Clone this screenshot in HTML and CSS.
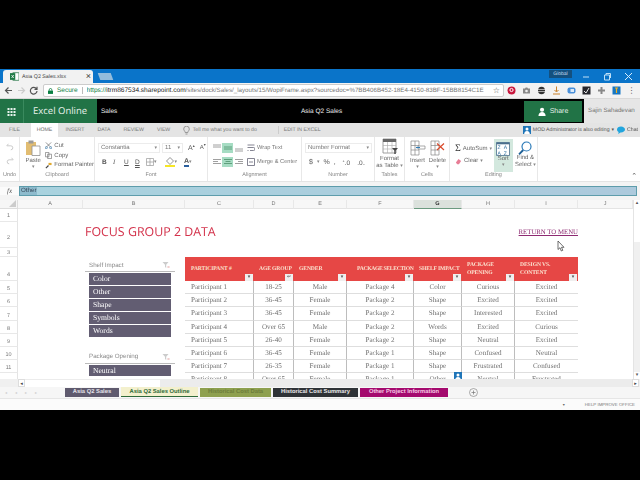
FILE: index.html
```html
<!DOCTYPE html>
<html lang="en">
<head>
<meta charset="utf-8">
<title>Asia Q2 Sales</title>
<link rel="stylesheet" href="styles.css">
</head>
<body>
<div class="screen">
  <div class="letterbox top"></div>

  <div class="tabstrip">
    <div class="tab">
      <svg class="ic9" viewBox="0 0 12 12"><rect x="4" y="1" width="8" height="10" fill="#fff" stroke="#2b7a4b"/><rect x="0" y="1.5" width="7" height="9" fill="#1f7a45"/><path d="M2 4l3 4M5 4L2 8" stroke="#fff"/></svg>
      <span class="tabtitle">Asia Q2 Sales.xlsx</span>
      <span class="tabclose">×</span>
    </div>
    <div class="newtab"></div>
    <div class="tabspacer"></div>
    <div class="tooltip">Global</div>
    <div class="winctl">
      <svg class="ic9" viewBox="0 0 9 9"><path d="M1 5h6" stroke="#bfe0f7"/></svg>
      <svg class="ic9" viewBox="0 0 9 9"><path d="M1.5 3h5v5h-5zM3 3V1.5h4.5V6" fill="none" stroke="#bfe0f7"/></svg>
      <svg class="ic9" viewBox="0 0 9 9"><path d="M1 1l7 7M8 1L1 8" stroke="#d5ecfb"/></svg>
    </div>
  </div>

  <div class="toolbar">
    <div class="navs">
      <svg class="ic9" viewBox="0 0 9 9"><path d="M8 4.500H1.500M4.500 1.500l-3 3 3 3" fill="none" stroke="#555" stroke-width="1.200"/></svg>
      <svg class="ic9" viewBox="0 0 9 9"><path d="M1 4.500h6.500M4.500 1.500l3 3-3 3" fill="none" stroke="#ccc" stroke-width="1.200"/></svg>
      <svg class="ic9" viewBox="0 0 9 9"><path d="M7.500 3A3.300 3.300 0 1 0 8 5M8 .8V3.300H5.500" fill="none" stroke="#555" stroke-width="1.200"/></svg>
    </div>
    <div class="omnibox">
      <svg class="lock" viewBox="0 0 6 7"><path d="M1.500 3V2a1.500 1.500 0 0 1 3 0v1" fill="none" stroke="#0b8043"/><rect y="3" width="6" height="4" x="0" fill="#0b8043"/></svg>
      <span class="secure">Secure</span>
      <span class="url"><b>https://</b><span class="host">itrm867534.sharepoint.com</span>/sites/dock/Sales/_layouts/15/WopiFrame.aspx?sourcedoc=%7BB406B452-18E4-4150-83BF-15BB8154C1E</span>
      <span class="star">☆</span>
    </div>
    <div class="exts">
      <svg class="ic9" viewBox="0 0 9 9"><circle cx="4.500" cy="4.500" r="4" fill="#c8173d"/><circle cx="4.500" cy="4" r="1.600" fill="none" stroke="#fff"/></svg>
      <svg class="ic9" viewBox="0 0 9 9"><path d="M1 2.500h2l.7-1h1.600l.7 1h2v5H1z" fill="#888"/><circle cx="4.500" cy="5" r="1.300" fill="#eee"/></svg>
      <svg class="ic9" viewBox="0 0 9 9"><ellipse cx="4.500" cy="4.500" rx="3.500" ry="3.800" fill="#333"/><path d="M1 3.500h7M1 5.500h7" stroke="#ddd" stroke-width=".7"/></svg>
      <svg class="ic9" viewBox="0 0 9 9"><path d="M4.500.5v5M2.500 4l2 2 2-2" fill="none" stroke="#c9812b"/><path d="M1 8h7" stroke="#c9812b"/></svg>
      <svg class="ic9" viewBox="0 0 9 9"><rect x=".5" y="1.500" width="8" height="6" rx="2" fill="#4a90d9"/><rect x="3.500" y="3" width="3.500" height="3" fill="#dbe9f7"/></svg>
      <svg class="ic9" viewBox="0 0 9 9"><rect x=".5" y=".5" width="8" height="8" fill="#26262c"/><path d="M2 5l2 2 3-5" fill="none" stroke="#e5e5e5"/></svg>
      <svg class="ic9" viewBox="0 0 9 9"><path d="M1 4.500h7M4.500 1v7" stroke="#888" stroke-width="2"/></svg>
      <svg class="ic9" viewBox="0 0 9 9"><rect x=".5" y=".5" width="8" height="8" fill="#1576c4"/><path d="M3 2h3M4.500 2v5" stroke="#f2b01e" stroke-width="1.200"/></svg>
      <span class="kebab">⋮</span>
    </div>
  </div>

  <div class="suite">
    <div class="waffle">
      <svg class="ic9" viewBox="0 0 9 9"><path d="M.5 1h2v2h-2zM3.500 1h2v2h-2zM6.500 1h2v2h-2zM.5 4h2v2h-2zM3.500 4h2v2h-2zM6.500 4h2v2h-2zM.5 7h2v2h-2zM3.500 7h2v2h-2zM6.500 7h2v2h-2z" fill="#e8f2ec"/></svg>
    </div>
    <div class="appname">Excel Online</div>
    <div class="crumbs">
      <span class="site">Sales</span>
      <span class="docname">Asia Q2 Sales</span>
    </div>
    <div class="share">
      <svg class="ic9" viewBox="0 0 10 10"><circle cx="4.500" cy="3" r="2.300" fill="#fff"/><path d="M.5 10c0-3 2-4.500 4-4.500s4 1.500 4 4.500z" fill="#fff"/></svg>
      <span>Share</span>
    </div>
    <div class="user">Sajin Sahadevan</div>
  </div>

  <div class="menu">
    <span class="mitem m-file">FILE</span>
    <span class="mitem active">HOME</span>
    <span class="mitem m-insert">INSERT</span>
    <span class="mitem">DATA</span>
    <span class="mitem">REVIEW</span>
    <span class="mitem">VIEW</span>
    <svg class="bulb" viewBox="0 0 7 9"><path d="M2.200 6.500C2 5 .7 4.500.7 3a2.800 2.800 0 0 1 5.600 0c0 1.500-1.300 2-1.500 3.500zM2.500 8h2" fill="none" stroke="#777" stroke-width=".7"/></svg>
    <span class="mitem tell">Tell me what you want to do</span>
    <span class="msep"></span>
    <span class="mitem m-edit">EDIT IN EXCEL</span>
    <span class="mspacer"></span>
    <svg class="ic8" viewBox="0 0 8 8"><rect width="8" height="8" fill="#1f75b8"/><circle cx="4" cy="3" r="1.500" fill="#fff"/><path d="M1.200 8c0-2 1.300-3 2.800-3s2.800 1 2.800 3z" fill="#fff"/></svg>
    <span class="mitem editing">MOD Administrator is also editing</span>
    <span class="caret">▾</span>
    <svg class="ic8 chaticon" viewBox="0 0 8 8"><path d="M4 .5C1.800.5 0 1.800 0 3.500c0 1 .6 1.900 1.600 2.400L1.200 8l2.300-1.600H4c2.200 0 4-1.300 4-2.900S6.200.5 4 .5z" fill="#22a5dd"/></svg>
    <span class="mitem chat">Chat</span>
  </div>

  <div class="ribbon">
    <div class="group g-undo">
      <div class="grp-body stack-c">
        <svg class="ic8" viewBox="0 0 10 10"><path d="M3 1L1 3.500h5a2.500 2.500 0 0 1 0 5" fill="none" stroke="#c9c9c9" stroke-width="1.200"/></svg>
        <svg class="ic8" viewBox="0 0 10 10"><path d="M7 1l2 2.500H4a2.500 2.500 0 0 0 0 5" fill="none" stroke="#c9c9c9" stroke-width="1.200"/></svg>
      </div>
      <div class="grp-label">Undo</div>
    </div>

    <div class="group g-clip">
      <div class="grp-body row">
        <div class="big b-paste">
          <svg class="ic16" viewBox="0 0 16 16"><rect x="1" y="2" width="10" height="13" fill="#e2bd72"/><rect x="3.500" y="0.500" width="5" height="3" fill="#9a9a9a"/><path d="M7 6h8v9.500H7z" fill="#fff" stroke="#8f8f8f" stroke-width=".8"/></svg>
          <span>Paste</span><span class="dd">▾</span>
        </div>
        <div class="small-list">
          <div class="small"><svg class="ic7" viewBox="0 0 8 8"><path d="M1 .5l5 5M7 .5l-5 5" stroke="#666" stroke-width=".8"/><circle cx="1.500" cy="6.500" r="1.200" fill="none" stroke="#3978a8" stroke-width=".8"/><circle cx="6.500" cy="6.500" r="1.200" fill="none" stroke="#3978a8" stroke-width=".8"/></svg><span>Cut</span></div>
          <div class="small"><svg class="ic7" viewBox="0 0 8 8"><path d="M.5.500h4v5h-4zM3 2.500h4.500v5H3z" fill="#fff" stroke="#777" stroke-width=".8"/></svg><span>Copy</span></div>
          <div class="small"><svg class="ic7" viewBox="0 0 8 8"><path d="M1 7l3-3" stroke="#444" stroke-width="1.400"/><path d="M4 1h3.500v2.500H4z" fill="#e0a92f"/></svg><span>Format Painter</span></div>
        </div>
      </div>
      <div class="grp-label">Clipboard</div>
    </div>

    <div class="group g-font">
      <div class="grp-body two-rows">
        <div class="tworow">
          <div class="combo c-font"><span>Constantia</span><span class="dd">▾</span></div>
          <div class="combo c-size"><span>11</span><span class="dd">▾</span></div>
          <span class="ab">A<sup>▴</sup></span>
          <span class="ab sm">A<sup>▾</sup></span>
        </div>
        <div class="tworow fmt">
          <b class="f">B</b><i class="f ital">I</i><u class="f">U</u><span class="f dbl">D</span>
          <svg class="ic8" viewBox="0 0 8 8"><path d="M.5.500h7v7h-7zM4 .5v7M.5 4h7" fill="none" stroke="#999" stroke-width=".7"/></svg><span class="dd">▾</span>
          <svg class="ic10 fill" viewBox="0 0 10 10"><path d="M5 .5l3.500 3.500L5 7.500 1.500 4z" fill="none" stroke="#777" stroke-width=".8"/><rect y="8" width="10" height="2" fill="#f6e625"/></svg><span class="dd">▾</span>
          <span class="colA">A</span><span class="dd">▾</span>
        </div>
      </div>
      <div class="grp-label">Font</div>
    </div>

    <div class="group g-align">
      <div class="grp-body aligngrid">
        <span class="al"><svg class="ic8" viewBox="0 0 8 8"><path d="M0 1h8M0 3h8" stroke="#888" stroke-width=".8"/></svg></span>
        <span class="al on"><svg class="ic8" viewBox="0 0 8 8"><path d="M0 3h8M0 5h8" stroke="#4d8f6a" stroke-width=".8"/></svg></span>
        <span class="al"><svg class="ic8" viewBox="0 0 8 8"><path d="M0 5h8M0 7h8" stroke="#888" stroke-width=".8"/></svg></span>
        <span class="wraptext"><svg class="ic8" viewBox="0 0 8 8"><path d="M.5 1h7M.5 3.500h6a1.500 1.500 0 0 1 0 3H3M.5 6.500h1" fill="none" stroke="#667" stroke-width=".8"/></svg>Wrap Text</span>
        <span class="al"><svg class="ic8" viewBox="0 0 8 8"><path d="M0 1.500h8M0 3.500h5M0 5.500h8" stroke="#888" stroke-width=".8"/></svg></span>
        <span class="al on"><svg class="ic8" viewBox="0 0 8 8"><path d="M0 1.500h8M1.500 3.500h5M0 5.500h8" stroke="#4d8f6a" stroke-width=".8"/></svg></span>
        <span class="al"><svg class="ic8" viewBox="0 0 8 8"><path d="M0 1.500h8M3 3.500h5M0 5.500h8" stroke="#888" stroke-width=".8"/></svg></span>
        <span class="wraptext"><svg class="ic8" viewBox="0 0 8 8"><path d="M.5.500h7v7h-7z" fill="none" stroke="#667" stroke-width=".8"/><path d="M2 4h4" stroke="#667" stroke-width=".8"/></svg>Merge &amp; Center</span>
      </div>
      <div class="grp-label">Alignment</div>
    </div>

    <div class="group g-num">
      <div class="grp-body two-rows">
        <div class="tworow">
          <div class="combo c-num"><span>Number Format</span><span class="dd">▾</span></div>
        </div>
        <div class="tworow numrow">
          <span class="n">$</span><span class="dd">▾</span><span class="n">%</span><span class="n">,</span>
          <span class="n tiny">⁺.0</span><span class="n tiny">.0₋</span>
        </div>
      </div>
      <div class="grp-label">Number</div>
    </div>

    <div class="group g-table">
      <div class="grp-body big b-table">
        <svg class="ic16" viewBox="0 0 16 16"><path d="M1 1h13v14H1z" fill="#fff" stroke="#888" stroke-width=".8"/><rect x="1" y="1" width="13" height="3" fill="#666"/><path d="M1 7.500h13M1 11h13M5.500 4v11M10 4v11" stroke="#aaa" stroke-width=".6"/><path d="M10 10h6l-2.300 2.500V16h-1.400v-3.500z" fill="#444"/></svg>
        <span>Format</span><span>as Table <i class="dd">▾</i></span>
      </div>
      <div class="grp-label">Tables</div>
    </div>

    <div class="group g-cells">
      <div class="grp-body row cellrow">
        <div class="big">
          <svg class="ic16" viewBox="0 0 16 16"><path d="M1 1h8v14H1zM1 5.500h8M1 10h8M5 1v14" fill="none" stroke="#888" stroke-width=".7"/><path d="M8 6h7v3H8z" fill="#fff" stroke="#888" stroke-width=".7"/><path d="M6 7.500h4" stroke="#2d7bb5" stroke-width="1.200"/></svg>
          <span>Insert</span><span class="dd">▾</span>
        </div>
        <div class="big">
          <svg class="ic16" viewBox="0 0 16 16"><path d="M1 1h8v14H1zM1 5.500h8M1 10h8M5 1v14" fill="none" stroke="#888" stroke-width=".7"/><path d="M7 3.500l7 6.500M14 3.500l-7 6.500" stroke="#d94a2b" stroke-width="1.200"/></svg>
          <span>Delete</span><span class="dd">▾</span>
        </div>
      </div>
      <div class="grp-label">Cells</div>
    </div>

    <div class="group g-edit">
      <div class="grp-body row editrow">
        <div class="small-list editlist">
          <div class="small"><span class="sigma">Σ</span><span>AutoSum</span><span class="dd">▾</span></div>
          <div class="small"><svg class="ic7" viewBox="0 0 8 8"><path d="M1 5l3-4 3 2.500L4.500 7H2.500z" fill="#e87d96"/></svg><span>Clear</span><span class="dd">▾</span></div>
        </div>
        <div class="big sort">
          <svg class="ic14" viewBox="0 0 14 14"><path d="M.5.500h13v13H.5z" fill="#fff" stroke="#4a6f8c" stroke-width=".8"/><rect x=".5" y=".5" width="13" height="1.800" fill="#4a6f8c"/><text x="1.600" y="7" class="sorttxt">Z</text><text x="7.800" y="7" class="sorttxt">A</text><text x="1.600" y="12.500" class="sorttxt">A</text><text x="7.800" y="12.500" class="sorttxt">Z</text></svg>
          <span>Sort</span><span class="dd">▾</span>
        </div>
        <div class="big find">
          <svg class="ic14" viewBox="0 0 14 14"><circle cx="8.500" cy="5.500" r="4.500" fill="#fff" stroke="#2b7ab8" stroke-width="1.200"/><path d="M5.200 9L1 13.300" stroke="#1d5f96" stroke-width="1.800"/></svg>
          <span>Find &amp;</span><span>Select <i class="dd">▾</i></span>
        </div>
      </div>
      <div class="grp-label">Editing</div>
    </div>
    <div class="collapse">⌃</div>
  </div>

  <div class="formula">
    <span class="fx">fx</span>
    <div class="fbox"><span class="fval">Other</span></div>
  </div>

  <div class="sheetwrap">
    <div class="sheet">
      <div class="corner"><svg class="cornertri" viewBox="0 0 8 8"><path d="M8 0v8H0z" fill="#ccc"/></svg></div>
      <div class="ch">A</div><div class="ch">B</div><div class="ch">C</div><div class="ch">D</div><div class="ch">E</div><div class="ch">F</div><div class="ch sel">G</div><div class="ch">H</div><div class="ch">I</div><div class="ch">J</div>

      <div class="rh rh-a">1</div>
      <div class="rh rh-b">2</div>
      <div class="title">FOCUS GROUP 2 DATA</div>
      <div class="linkcell"><a class="retlink" href="#">RETURN TO MENU</a>
        <svg class="cursor" viewBox="0 0 8 12"><path d="M1 1v8.500l2-1.800L4.300 11l1.500-.7-1.300-3H7z" fill="#fff" stroke="#333" stroke-width=".7"/></svg>
      </div>
      <div class="rh rh-c">3</div>

      <div class="rh rh-a">4</div>
      <div class="th first"><span>PARTICIPANT #</span><i class="fbtn">▾</i></div>
      <div class="th"><span>AGE GROUP</span><i class="fbtn">↵</i></div>
      <div class="th"><span>GENDER</span><i class="fbtn">▾</i></div>
      <div class="th th-pkg"><span>PACKAGE SELECTION</span><i class="fbtn">▾</i></div>
      <div class="th"><span>SHELF IMPACT</span><i class="fbtn">▾</i></div>
      <div class="th wrap"><span>PACKAGE OPENING</span><i class="fbtn">▾</i></div>
      <div class="th wrap last"><span>DESIGN VS. CONTENT</span><i class="fbtn">▾</i></div>

      <div class="rh">5</div>
      <div class="td first">Participant 1</div><div class="td">18-25</div><div class="td">Male</div><div class="td">Package 4</div><div class="td">Color</div><div class="td">Curious</div><div class="td last">Excited</div>
      <div class="rh">6</div>
      <div class="td first">Participant 2</div><div class="td">36-45</div><div class="td">Female</div><div class="td">Package 2</div><div class="td">Shape</div><div class="td">Excited</div><div class="td last">Excited</div>
      <div class="rh">7</div>
      <div class="td first">Participant 3</div><div class="td">36-45</div><div class="td">Female</div><div class="td">Package 2</div><div class="td">Shape</div><div class="td">Interested</div><div class="td last">Excited</div>
      <div class="rh">8</div>
      <div class="td first">Participant 4</div><div class="td">Over 65</div><div class="td">Male</div><div class="td">Package 2</div><div class="td">Words</div><div class="td">Excited</div><div class="td last">Curious</div>
      <div class="rh">9</div>
      <div class="td first">Participant 5</div><div class="td">26-40</div><div class="td">Female</div><div class="td">Package 2</div><div class="td">Shape</div><div class="td">Neutral</div><div class="td last">Excited</div>
      <div class="rh">10</div>
      <div class="td first">Participant 6</div><div class="td">36-45</div><div class="td">Female</div><div class="td">Package 1</div><div class="td">Shape</div><div class="td">Confused</div><div class="td last">Neutral</div>
      <div class="rh">11</div>
      <div class="td first">Participant 7</div><div class="td">26-35</div><div class="td">Female</div><div class="td">Package 1</div><div class="td">Shape</div><div class="td">Frustrated</div><div class="td last">Confused</div>
      <div class="rh">12</div>
      <div class="td first">Participant 8</div><div class="td">Over 65</div><div class="td">Female</div><div class="td">Package 1</div><div class="td flagged">Other<svg class="flag" viewBox="0 0 8 8"><rect width="8" height="8" fill="#1f75b8"/><circle cx="4" cy="3" r="1.500" fill="#fff"/><path d="M1.200 8c0-2 1.300-3 2.800-3s2.800 1 2.800 3z" fill="#fff"/></svg></div><div class="td">Neutral</div><div class="td last">Frustrated</div>

      <div class="slicers">
        <div class="slicer-head"><span>Shelf Impact</span><svg class="ic8" viewBox="0 0 8 8"><path d="M.5 1h6L4.200 3.800V7L3 6V3.800z" fill="#ccc"/><path d="M5.500 5l2 2M7.500 5l-2 2" stroke="#e3a2a2" stroke-width=".6"/></svg></div>
        <div class="sl-btn">Color</div>
        <div class="sl-btn">Other</div>
        <div class="sl-btn">Shape</div>
        <div class="sl-btn">Symbols</div>
        <div class="sl-btn">Words</div>
        <div class="slicer-head second"><span>Package Opening</span><svg class="ic8" viewBox="0 0 8 8"><path d="M.5 1h6L4.200 3.800V7L3 6V3.800z" fill="#ccc"/><path d="M5.500 5l2 2M7.500 5l-2 2" stroke="#e3a2a2" stroke-width=".6"/></svg></div>
        <div class="sl-btn">Neutral</div>
      </div>
    </div>
    <div class="vscroll">
      <span class="sb-arrow">▴</span>
      <div class="sb-thumb"></div>
      <div class="sb-track"></div>
      <span class="sb-arrow">▾</span>
    </div>
  </div>

  <div class="hscroll">
    <span class="hs-arrow">◂</span>
    <div class="hs-thumb"></div>
    <div class="hs-track"></div>
    <span class="hs-arrow">▸</span>
  </div>

  <div class="sheettabs">
    <div class="navdots"><span>◂</span><span>◂</span><span>▸</span><span>▸</span></div>
    <div class="stab s1">Asia Q2 Sales</div>
    <div class="stab s2">Asia Q2 Sales Outline</div>
    <div class="stab s3">Historical Cost Data</div>
    <div class="stab s4">Historical Cost Summary</div>
    <div class="stab s5">Other Project Information</div>
    <svg class="addtab" viewBox="0 0 9 9"><circle cx="4.500" cy="4.500" r="4" fill="none" stroke="#888" stroke-width=".7"/><path d="M4.500 2.500v4M2.500 4.500h4" stroke="#777" stroke-width=".7"/></svg>
  </div>

  <div class="status">
    <span class="st-caret">▾</span>
    <span class="st-help">HELP IMPROVE OFFICE</span>
  </div>

  <div class="letterbox bottom"></div>
</div>
</body>
</html>
```

FILE: styles.css
```css
* { box-sizing: border-box; }
html, body { margin: 0; padding: 0; background: #000; }
body { width: 640px; height: 480px; overflow: hidden; }

.screen {
  width: 640px; height: 480px; display: flex; flex-direction: column;
  font-family: "Liberation Sans", Arial, sans-serif; font-size: 6px; color: #666;
  text-rendering: geometricPrecision;
  filter: blur(0.35px);
}
.letterbox { background: #000; flex: none; }
.letterbox.top { height: 69px; }
.letterbox.bottom { flex: 1; }

.ic7 { width: 7px; height: 7px; flex: none; }
.ic8 { width: 8px; height: 8px; flex: none; }
.ic9 { width: 9px; height: 9px; flex: none; }
.ic10 { width: 10px; height: 10px; flex: none; }
.ic14 { width: 14px; height: 14px; flex: none; }
.ic16 { width: 16px; height: 16px; flex: none; }
.dd { font-size: 5px; color: #888; font-style: normal; line-height: 1; }

/* browser chrome */
.tabstrip { height: 14px; background: #0a74c9; display: flex; align-items: flex-end; flex: none; }
.tab {
  width: 90px; height: 13px; margin-left: 3px; background: #f2f2f2; display: flex; align-items: center;
  gap: 3px; padding: 0 2px 0 7px; border-radius: 3px 3px 0 0; color: #444;
}
.tabtitle { font-size: 5.300px; flex: 1; white-space: nowrap; }
.tabclose { font-size: 9px; line-height: 1; color: #444; }
.newtab { width: 13px; height: 7px; margin: 0 0 3px 6px; background: #93bcdc; transform: skewX(20deg); }
.tabspacer { flex: 1; }
.tooltip {
  align-self: flex-start; margin-top: 1px; width: 23px; height: 8px; background: #14507f; color: #c5dcee;
  font-size: 5px; line-height: 8px; text-align: center; margin-right: 10px;
}
.winctl { display: flex; gap: 12px; align-self: center; padding-right: 7px; }

.toolbar { height: 16px; background: #f2f2f2; display: flex; align-items: center; flex: none; border-bottom: 1px solid #d9d9d9; }
.navs { width: 43px; display: flex; justify-content: space-between; padding: 0 5px 0 4px; }
.omnibox {
  width: 461px; height: 13px; background: #fff; border: 1px solid #ccc; border-radius: 2px; display: flex;
  align-items: center; padding: 0 3px 0 4px; overflow: hidden; white-space: nowrap;
}
.lock { width: 5px; height: 6px; margin-right: 4px; flex: none; }
.secure { font-size: 6.500px; color: #0b8043; padding-right: 4px; border-right: 1px solid #bbb; margin-right: 4px; }
.url { font-size: 6.200px; color: #777; overflow: hidden; flex: 1; }
.url b { font-size: 6.550px; font-weight: 400; color: #0b8043; }
.host { font-size: 6.550px; color: #222; }
.star { font-size: 8px; color: #555; margin-left: 3px; }
.exts { flex: 1; display: flex; align-items: center; gap: 6px; padding-left: 3px; }
.kebab { font-size: 8px; color: #555; line-height: 1; width: 9px; text-align: center; }

/* suite bar */
.suite { height: 24px; background: #000; display: flex; align-items: stretch; flex: none; }
.waffle { width: 24px; background: #217346; display: flex; align-items: center; justify-content: center; border-right: 1px solid #3a8a5e; }
.appname {
  width: 73px; background: #217346; color: #e8f2ec; font-family: "Open Sans", sans-serif; font-size: 9.500px; line-height: 24px; padding-left: 9px;
  white-space: nowrap;
}
.crumbs { flex: 1; display: flex; align-items: center; color: #eee; font-size: 6.500px; padding-left: 4px; }
.site { width: 200px; }
.share {
  width: 58px; margin: 2px 0 1px; background: #217346; color: #e4f0e9; font-size: 7px; display: flex;
  align-items: center; justify-content: center; gap: 3px;
}
.user { width: 56px; margin-left: 2px; background: #e6e6e6; color: #777; font-size: 6.200px; line-height: 24px; padding-left: 4px; white-space: nowrap; }

/* menu */
.menu { height: 14px; background: #e4e4e4; display: flex; align-items: center; flex: none; white-space: nowrap; }
.mitem { font-size: 5.200px; color: #777; padding: 0 6.500px; line-height: 14px; }
.mitem.m-file { width: 31px; padding: 0 0 0 9px; }
.mitem.active { background: #fff; width: 27px; padding: 0; text-align: center; color: #666; }
.mitem.m-insert { margin-left: 1px; }
.bulb { width: 7px; height: 9px; margin-left: 6px; flex: none; }
.mitem.tell { padding: 0 21px 0 3px; }
.mitem.m-edit { padding-left: 5px; }
.msep { width: 1px; height: 8px; background: #ccc; }
.mspacer { flex: 1; }
.mitem.editing { padding: 0 2px; color: #555; font-size: 5.200px; }
.caret { font-size: 5px; color: #555; }
.chaticon { margin-left: 3px; }
.mitem.chat { padding: 0 2px; color: #555; }

/* ribbon */
.ribbon { height: 45px; background: #fff; display: flex; flex: none; border-bottom: 1px solid #e4e4e4; position: relative; }
.group { display: flex; flex-direction: column; border-right: 1px solid #e8e8e8; flex: none; }
.grp-body { flex: 1; min-height: 0; }
.grp-label { height: 10px; line-height: 9px; text-align: center; font-size: 5.500px; color: #888; flex: none; }
.g-undo { width: 20px; } .g-clip { width: 75px; } .g-font { width: 113px; } .g-align { width: 94px; }
.g-num { width: 73px; } .g-table { width: 30px; } .g-cells { width: 45px; } .g-edit { width: 88px; }
.stack-c { display: flex; flex-direction: column; align-items: center; justify-content: space-evenly; }
.row { display: flex; }
.big { display: flex; flex-direction: column; align-items: center; font-size: 6px; line-height: 7px; color: #666; padding-top: 3px; white-space: nowrap; }
.big .ic16 { margin-bottom: 2px; }
.b-paste { width: 26px; margin-left: 1px; }
.small-list { display: flex; flex-direction: column; justify-content: space-between; padding: 4px 0 1px; font-size: 6px; color: #666; }
.small { display: flex; align-items: center; gap: 2px; white-space: nowrap; height: 10px; }

.two-rows { display: flex; flex-direction: column; padding: 6px 0 0 3px; gap: 4px; }
.tworow { display: flex; align-items: center; height: 10px; gap: 2px; }
.combo {
  height: 10px; border: 1px solid #ececec; display: flex; align-items: center; justify-content: space-between;
  padding: 0 2px; font-size: 6px; color: #777; white-space: nowrap;
}
.c-font { width: 62px; } .c-size { width: 21px; } .c-num { width: 67px; }
.ab { font-size: 7px; color: #555; margin-left: 3px; }
.ab.sm { font-size: 6px; }
.ab sup { font-size: 4px; line-height: 0; vertical-align: 3px; }
.fmt { padding-left: 4px; gap: 0; }
.f { width: 11px; font-size: 6.500px; color: #555; text-align: left; text-decoration-thickness: 1px; }
.ital { font-family: "Liberation Serif", serif; }
.dbl { text-decoration: underline double; }
.fill { margin-left: 8px; }
.colA { margin-left: 7px; font-size: 7px; font-weight: 700; color: #555; border-bottom: 2px solid #2b5f9e; line-height: 7px; }

.aligngrid {
  display: grid; grid-template-columns: 11px 11px 11px 1fr; grid-auto-rows: 10px; row-gap: 4px;
  padding: 6px 0 0 3px; align-items: center; align-content: start;
}
.al { display: flex; align-items: center; justify-content: center; height: 10px; }
.al.on { background: #a6dcc3; }
.wraptext { display: flex; align-items: center; gap: 2px; font-size: 5.700px; color: #777; white-space: nowrap; padding-left: 3px; }
.numrow { gap: 4px; padding-left: 4px; }
.n { font-size: 7px; color: #555; }
.n.tiny { font-size: 6.500px; margin-left: 3px; }
.b-table { padding-top: 1px; }
.cellrow { padding-left: 5px; gap: 5px; }
.cellrow .big { width: 15px; }
.editrow { padding-left: 5px; }
.editlist { width: 40px; padding-top: 7px; padding-bottom: 5px; }
.sigma { font-size: 10px; color: #333; font-family: "Liberation Serif", serif; line-height: 1; }
.sort { width: 20px; background: #d3e8de; padding-top: 3px; height: 33px; margin-top: 2px; }
.find { width: 24px; margin-left: 1px; padding-top: 4px; }
.sorttxt { font-size: 5px; fill: #2d6f9e; }
.collapse { position: absolute; right: 3px; bottom: 1px; font-size: 7px; color: #555; }

/* formula bar */
.formula { height: 18px; background: #f4f4f4; display: flex; align-items: center; padding: 4px 3px 4px 0; flex: none; }
.fx { width: 19px; text-align: center; font-family: "Liberation Serif", serif; font-style: italic; font-size: 7px; color: #555; flex: none; background: #fbfbfb; }
.fbox { flex: 1; height: 10px; background: linear-gradient(90deg, #a8d2de, #acc9dc); border: 1px solid #5d9cab; display: flex; align-items: center; }
.fval { background: #8ebbcd; color: #345; font-size: 6.200px; line-height: 8px; padding: 0 1px; }

/* sheet */
.sheetwrap { height: 179px; display: flex; background: #fff; flex: none; }
.sheet {
  width: 633px; height: 179px; display: grid; overflow: hidden; background: #fff;
  grid-template-columns: 18px 65px 102px 69px 40px 53px 67px 48px 53px 63px 55px;
  grid-template-rows: 9px 13px 26px 9px 24px repeat(8, 13.2px);
}
.corner { background: #f6f6f6; border-right: 1px solid #ddd; border-bottom: 1px solid #ddd; display: flex; justify-content: flex-end; align-items: flex-end; padding: 0 1px 1px 0; }
.cornertri { width: 7px; height: 7px; }
.ch { background: #f7f7f7; border-right: 1px solid #e8e8e8; border-bottom: 1px solid #e4e4e4; text-align: center; font-size: 5.500px; line-height: 8px; color: #777; }
.ch.sel { background: #dbe1dc; border-bottom: 1px solid #6c9a80; color: #333; font-weight: 700; }
.rh { grid-column: 1; background: #fff; border-right: 1px solid #e4e4e4; border-bottom: 1px solid #e8e8e8; font-size: 5.500px; line-height: 6px; color: #777; text-align: center; display: flex; align-items: flex-end; justify-content: center; padding-bottom: 1px; }
.rh.rh-a { padding-bottom: 2px; }
.rh.rh-b { padding-bottom: 6px; }
.rh.rh-c { padding-bottom: 0; }

.title { grid-column: 3 / 8; font-family: "Open Sans", sans-serif; font-size: 12.400px; color: #d3324b; padding: 2px 0 0 2px; line-height: 16px; white-space: nowrap; }
.linkcell { grid-column: 10; text-align: right; position: relative; white-space: nowrap; padding-top: 6px; line-height: 9px; }
.retlink { font-family: "Liberation Serif", serif; font-size: 6.800px; color: #8e2a72; }
.cursor { position: absolute; left: 42px; top: 18px; width: 8px; height: 12px; }

.th {
  background: #e64745; color: #fbe3d0; font-family: "Liberation Serif", serif; font-weight: 700; font-size: 5.600px; letter-spacing: -.1px;
  line-height: 8.500px; position: relative; display: flex; align-items: center; padding: 0 0 0 5px; white-space: nowrap;
}
.th.th-pkg { padding-left: 10px; letter-spacing: -.3px; }
.th.wrap { white-space: normal; padding-right: 14px; }
.th.first { grid-column: 4; padding-left: 6px; }
.fbtn {
  position: absolute; right: 1px; bottom: 0; width: 8px; height: 7px; background: #efefef; color: #555; letter-spacing: 0;
  font-style: normal; font-size: 5px; line-height: 7px; text-align: center; font-family: "Liberation Sans", sans-serif; font-weight: 400;
}
.td {
  font-family: "Liberation Serif", serif; font-size: 7.100px; color: #707070; text-align: center; line-height: 13.500px;
  border-bottom: 1px solid #dedede; border-right: 1px solid #bdbdbd; white-space: nowrap; position: relative;
}
.td.first { grid-column: 4; text-align: left; padding-left: 6px; }
.td.last { border-right: 0; }
.flag { position: absolute; right: -1px; top: -1px; width: 8px; height: 8px; }

.slicers { grid-column: 3; grid-row: 5 / 14; margin-left: 2px; width: 90px; padding-top: 3px; overflow: hidden; }
.slicer-head {
  height: 12px; border-bottom: 1px solid #bbb; margin-bottom: 1px; display: flex; justify-content: space-between;
  align-items: center; padding: 0 5px 1px 4px; font-size: 6.200px; color: #888;
}
.slicer-head.second { margin-top: 15px; }
.sl-btn {
  height: 11.500px; margin: 0 4px 1.500px; background: #625d72; color: #fff; padding-left: 4px;
  font-family: "Liberation Serif", serif; font-size: 7.600px; line-height: 11px;
}

.vscroll { width: 7px; display: flex; flex-direction: column; background: #f0f0f0; border-left: 1px solid #e4e4e4; }
.sb-arrow { height: 7px; font-size: 5px; line-height: 7px; text-align: center; color: #555; background: #fff; flex: none; }
.sb-thumb { height: 35px; background: #fff; flex: none; }
.sb-track { flex: 1; background: #f0f0f0; }

.hscroll { height: 8px; display: flex; flex: none; background: #f0f0f0; }
.hs-arrow { width: 7px; margin-left: 18px; font-size: 5px; line-height: 8px; text-align: center; background: #fff; color: #444; border: 1px solid #ddd; flex: none; }
.hs-arrow:last-child { margin: 0 1px 0 0; }
.hs-thumb { width: 135px; background: #fff; border-top: 1px solid #ececec; flex: none; }
.hs-track { flex: 1; background: #ececec; }

.sheettabs { height: 12px; background: #f6f6f6; display: flex; align-items: flex-start; padding-top: 1px; flex: none; border-bottom: 1px solid #e6e6e6; }
.navdots { width: 65px; display: flex; gap: 8px; padding: 2px 0 0 5px; font-size: 4px; color: #ccc; }
.stab { height: 9px; font-size: 5.800px; font-weight: 700; line-height: 9px; text-align: center; white-space: nowrap; margin-right: 2px; flex: none; }
.s1 { width: 54px; background: #5f5a6e; color: #e4e2ea; }
.s2 { width: 77px; background: #f3f0cd; color: #2f6a3a; border-bottom: 1px solid #2f6a3a; margin-top: -1px; height: 10px; line-height: 10px; }
.s3 { width: 71px; background: #8ea04f; color: #6c7c3b; }
.s4 { width: 85px; background: #2f3337; color: #e9e9e9; }
.s5 { width: 88px; background: #a40a6e; color: #f5c9e4; }
.addtab { width: 9px; height: 9px; margin-left: 19px; }

.status { height: 11px; background: #fbfbfb; display: flex; align-items: center; justify-content: flex-end; flex: none; padding-right: 5px; }
.st-caret { font-size: 4px; margin-right: 20px; color: #666; }
.st-help { font-size: 4.400px; color: #777; }
```
